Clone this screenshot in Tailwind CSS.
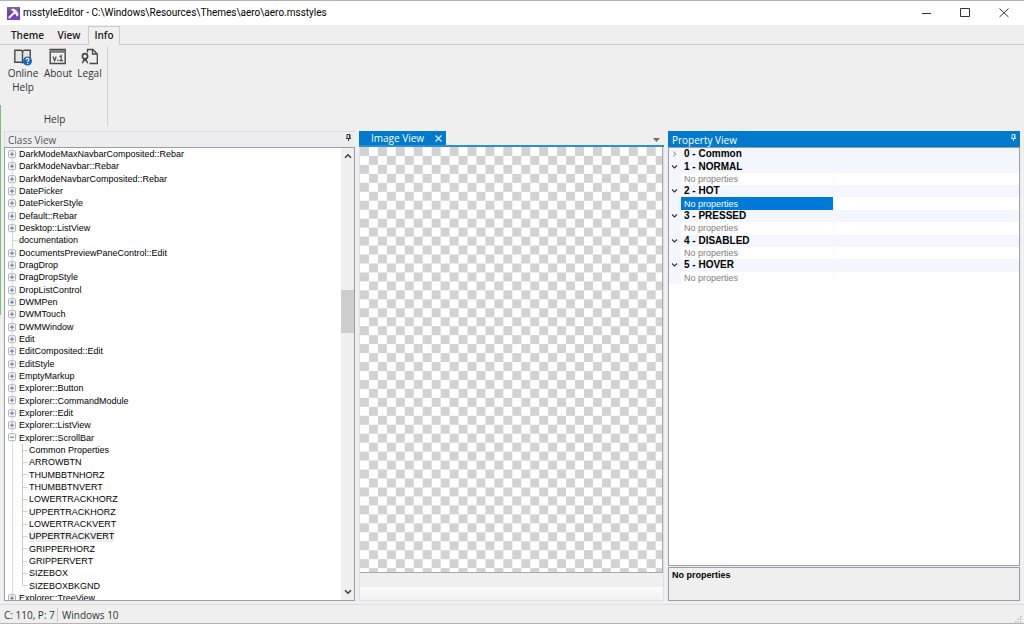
<!DOCTYPE html>
<html lang="en">
<head>
<meta charset="utf-8">
<meta name="viewport" content="width=device-width, initial-scale=1">
<title>msstyleEditor</title>
<script src="https://cdn.jsdelivr.net/npm/@tailwindcss/browser@4"></script>
</head>
<body class="relative flex h-screen flex-col overflow-hidden border-y border-[#b4b4b4] bg-[#efefef] font-['Open_Sans','Noto_Sans',sans-serif] text-[10px] leading-[14px] text-[#333]">
<div class="absolute left-0 top-[104px] h-[210px] w-px bg-[#79c379]"></div>

<header class="flex h-6 shrink-0 items-center bg-white pl-[7px] text-black">
  <svg class="size-[13px]" viewBox="0 0 13 13" aria-hidden="true">
    <defs><linearGradient id="logo" x1="0" y1="0" x2="0" y2="1"><stop offset="0" stop-color="#7a6d96"/><stop offset=".5" stop-color="#6b3fb4"/><stop offset="1" stop-color="#7b44d4"/></linearGradient></defs>
    <rect width="13" height="13" fill="url(#logo)"/>
    <path d="M1.800 11 7.500 5.500" stroke="#fff" stroke-width="2"/>
    <path d="M3.600 2.500 6.500 1.600 9.400 3.200l1 1.700 1.300 1.500-.6 2.500-1.500.5L8.300 7 6.300 4.600z" fill="#f2ecfa"/>
  </svg>
  <h1 class="ml-[3px] whitespace-nowrap font-[Roboto,sans-serif]">msstyleEditor - C:\Windows\Resources\Themes\aero\aero.msstyles</h1>
  <div class="ml-auto flex h-full">
    <button class="grid w-10 place-items-center" aria-label="Minimize"><svg class="size-[10px]" viewBox="0 0 10 10"><path d="M1 5.500h9" stroke="#333"/></svg></button>
    <button class="grid w-[38px] place-items-center" aria-label="Maximize"><svg class="size-[10px]" viewBox="0 0 10 10"><path d="M.500.500h9v8h-9z" fill="none" stroke="#333"/></svg></button>
    <button class="grid w-10 place-items-center" aria-label="Close"><svg class="size-[10px]" viewBox="0 0 10 10"><path d="M.500.500 9.500 9M9.500.500.500 9" stroke="#333"/></svg></button>
  </div>
</header>

<nav class="flex h-5 shrink-0 items-stretch border-b border-[#cacaca] pl-[5px] font-semibold text-[#222]" aria-label="Ribbon tabs">
  <button class="w-[45px]">Theme</button>
  <button class="w-[38px]">View</button>
  <button class="-mb-px mt-px w-8 border border-b-0 border-[#cacaca] bg-[#efefef] pb-[2px]">Info</button>
</nav>

<section class="flex h-[86px] shrink-0 items-start pb-[5px] pl-[5px] pt-px" aria-label="Info">
  <div class="flex h-full flex-col border-r border-[#d2d2d2] pr-[3px]">
    <div class="flex items-start">
      <button class="flex w-9 flex-col items-center pt-[2px]">
        <svg class="size-[18px]" viewBox="0 0 18 18" fill="none" stroke="#484848"><path d="M8.500 3.500v11M.8 2.300H7l1.500 1.200L10 2.300h6.200v11.900H10l-1.500.8L7 14.200H.8z" stroke-width="1.400" fill="#e6e6e6"/><circle cx="13.500" cy="13" r="4.500" fill="#1268c4" stroke="none"/><path d="M12 11.800c0-2 3-1.900 3-.2 0 1.200-1.400 1-1.400 2.200M13.600 14.700v1.200" stroke="#fff" stroke-width="1.200"/></svg>
        <span>Online<br>Help</span>
      </button>
      <button class="flex w-[34px] flex-col items-center pt-[2px]">
        <svg class="size-[18px]" viewBox="0 0 18 18" fill="none" stroke="#484848"><path d="M1.200 1.500h15v14h-15z" stroke-width="1.400"/><path d="M1.200 3.500h15" stroke-width="2.600" stroke="#777"/><path d="m4 8.500 1.600 4.200 1.600-4.200M8.800 11.500v1.600M10.500 8.800l1.700-1.200v5.500M10.400 12.600h3.600" stroke-width="1.200"/></svg>
        <span>About</span>
      </button>
      <button class="flex w-[29px] flex-col items-center pt-[2px]">
        <svg class="size-[18px]" viewBox="0 0 18 18" fill="none" stroke="#484848" stroke-width="1.300"><path d="M6.500 4.500v-3h5.300l4.500 4.500v9.500H8.500M11.500 1.500V6h4.800"/><circle cx="4" cy="8.300" r="2.600" stroke-width="1.700"/><path d="m3.200 10.800-1.900 4.500M4.800 10.800l1.900 4.500M2.500 13.200 4 11.700l1.500 1.500"/></svg>
        <span>Legal</span>
      </button>
    </div>
    <div class="mt-auto text-center">Help</div>
  </div>
</section>

<main class="flex min-h-0 flex-1 gap-1 px-1">
  <section class="flex w-[351px] shrink-0 flex-col" aria-label="Class View">
    <div class="flex h-4 shrink-0 items-center gap-1 border-l border-t border-[#dcdce4] bg-[#ededf1] pl-[3px] pr-[3px] text-[#555]">
      <h2 class="whitespace-nowrap">Class View</h2>
      <div class="h-[4px] flex-1 bg-[radial-gradient(#d2d2d6_40%,transparent_45%)] bg-[size:2px_2px]"></div>
      <button class="mb-1 ml-2" aria-label="Pin Class View"><svg class="h-[8px] w-[7px]" viewBox="0 0 7 8"><path d="M2 .500h3v4H2zM1 4.500h5M3.500 4.500V7" fill="none" stroke="#333"/><path d="M4.500 0v4.500" stroke="#333"/></svg></button>
    </div>
    <div class="flex min-h-0 flex-1 border border-[#9a9ca6] bg-white">
      <div class="min-w-0 flex-1 overflow-hidden">
        <ul id="tree" class="grid h-[456px] auto-rows-fr font-['Liberation_Sans',Arial,sans-serif] text-[9px] leading-[12px] text-black" role="tree"></ul>
      </div>
      <div class="flex w-[13px] shrink-0 flex-col items-center bg-[#efefef]">
        <button class="grid h-4 w-full place-items-center" aria-label="Scroll up"><svg class="h-[6px] w-[8px]" viewBox="0 0 8 6"><path d="M1 4.800 4 1.800l3 3" fill="none" stroke="#444" stroke-width="1.600"/></svg></button>
        <div class="grow-[126]"></div>
        <div class="h-[43px] w-full bg-[#cdcdcd]"></div>
        <div class="grow-[251]"></div>
        <button class="grid h-4 w-full place-items-center" aria-label="Scroll down"><svg class="h-[6px] w-[8px]" viewBox="0 0 8 6"><path d="m1 1.200 3 3 3-3" fill="none" stroke="#444" stroke-width="1.600"/></svg></button>
      </div>
    </div>
  </section>

  <section class="flex min-w-0 flex-1 flex-col" aria-label="Image View">
    <div class="flex h-4 shrink-0 items-stretch border-b-2 border-[#2a8fd6]">
      <div class="flex w-[87px] items-center justify-between bg-[#007acc] pl-3 pr-1 text-white">
        <h2 class="whitespace-nowrap">Image View</h2>
        <button aria-label="Close Image View"><svg class="size-[7px]" viewBox="0 0 7 7"><path d="m.500.500 6 6M6.500.500l-6 6" stroke="#d5eaf8" stroke-width="1.300"/></svg></button>
      </div>
      <button class="ml-auto mr-1 mt-1" aria-label="Window list"><svg class="h-[4px] w-[7px]" viewBox="0 0 7 4"><path d="M0 0h7L3.500 4z" fill="#717171"/></svg></button>
    </div>
    <div class="flex min-h-0 flex-1 flex-col border border-t-0 border-[#dfdfe8]">
      <svg class="min-h-0 w-full flex-1 border-b border-r border-[#a8a8a8] bg-white" role="img" aria-label="Transparent image">
        <defs><pattern id="checks" width="17.920" height="17.920" patternUnits="userSpaceOnUse"><path d="M0 0h8.960v8.960H0zM8.960 8.960h8.960v8.960H8.960z" fill="#d2d2d2"/></pattern></defs>
        <rect width="100%" height="100%" fill="url(#checks)"/>
      </svg>
      <div class="h-[14px] shrink-0"></div>
      <div class="h-[13px] shrink-0 bg-linear-to-b from-[#fcfcfc] to-[#f1f1f1]"></div>
    </div>
  </section>

  <section class="flex w-[352px] shrink-0 flex-col" aria-label="Property View">
    <div class="flex h-4 shrink-0 items-center gap-1 bg-[#007acc] pl-1 pr-[3px] pt-px text-white">
      <h2 class="whitespace-nowrap">Property View</h2>
      <div class="h-[4px] flex-1 bg-[radial-gradient(#2b92d8_40%,transparent_45%)] bg-[size:2px_2px]"></div>
      <button class="mb-1 ml-2" aria-label="Pin Property View"><svg class="h-[8px] w-[7px]" viewBox="0 0 7 8"><path d="M2 .500h3v4H2zM1 4.500h5M3.500 4.500V7M4.500 0v4.500" fill="none" stroke="#cfe6f6"/></svg></button>
    </div>
    <div class="flex-1 border border-[#9a9ca6] bg-white">
      <div id="props" class="grid h-[136px] auto-rows-fr font-['Liberation_Sans',Arial,sans-serif] text-[10px] leading-[12px]"></div>
    </div>
    <div class="mt-px h-[34px] shrink-0 border border-[#9a9ca6] pl-[3px] pt-px font-['Liberation_Sans',Arial,sans-serif] text-[9px] font-bold leading-[12px] text-black">No properties</div>
  </section>
</main>

<footer class="mt-[3px] flex h-[19px] shrink-0 items-center border-t border-[#dedede] pl-[4px] pt-px">
  <span class="w-[54px] whitespace-nowrap border-r border-[#c8c8c8]">C: 110, P: 7</span>
  <span class="ml-1">Windows 10</span>
  <svg class="ml-auto mr-[2px] size-[7px] self-end" viewBox="0 0 7 7" aria-hidden="true"><path d="M5 0h1.500v1.500H5zM2.500 2.500H4V4H2.500zM5 2.500h1.500V4H5zM0 5h1.500v1.500H0zM2.500 5H4v1.500H2.500zM5 5h1.500v1.500H5z" fill="#bdbdbd"/></svg>
</footer>

<script>
const before = ['DarkModeMaxNavbarComposited::Rebar','DarkModeNavbar::Rebar','DarkModeNavbarComposited::Rebar','DatePicker','DatePickerStyle','Default::Rebar','Desktop::ListView','documentation','DocumentsPreviewPaneControl::Edit','DragDrop','DragDropStyle','DropListControl','DWMPen','DWMTouch','DWMWindow','Edit','EditComposited::Edit','EditStyle','EmptyMarkup','Explorer::Button','Explorer::CommandModule','Explorer::Edit','Explorer::ListView','Explorer::ScrollBar'];
const parts = ['Common Properties','ARROWBTN','THUMBBTNHORZ','THUMBBTNVERT','LOWERTRACKHORZ','UPPERTRACKHORZ','LOWERTRACKVERT','UPPERTRACKVERT','GRIPPERHORZ','GRIPPERVERT','SIZEBOX','SIZEBOXBKGND'];
const box = open => `<svg class="h-full w-[14px] shrink-0" viewBox="0 0 14 12" aria-hidden="true"><path d="M7.500-1v14" stroke="#dcdcdc"/><rect x="3.500" y="2.500" width="7" height="7" rx="1" fill="#f4f4f4" stroke="#b4b4b4"/><path d="M5 6h4${open ? '' : 'M7 4v4'}" stroke="#5670b8"/></svg>`;
const leaf = '<svg class="h-full w-[14px] shrink-0" viewBox="0 0 14 12" aria-hidden="true"><path d="M7.500-1v14M7.500 6.500h5" stroke="#d0d0d0" fill="none"/></svg>';
const child = last => `<svg class="h-full w-[24px] shrink-0" viewBox="0 0 24 12" aria-hidden="true"><path d="M7.500-1v14" stroke="#dcdcdc"/><path d="M17.500-1V${last ? '6.500' : '13'}M17.500 6.500h5" stroke="#cacaca" fill="none"/></svg>`;
const row = (icon, name, selected) => `<li class="flex min-h-0 items-center whitespace-nowrap" role="treeitem">${icon}<span class="${selected ? 'bg-[#efefef]' : ''}">${name}</span></li>`;
document.getElementById('tree').innerHTML =
  before.map(n => row(n === 'documentation' ? leaf : box(n === 'Explorer::ScrollBar'), n)).join('') +
  parts.map((n, i) => row(child(i === parts.length - 1), n, n === 'UPPERTRACKVERT')).join('') +
  row(box(false), 'Explorer::TreeView');

const group = (name, open) => `<div class="flex min-h-0 items-center bg-[#f3f6fc] font-bold text-black"><svg class="mr-[6px] ml-[2px] h-[8px] w-[7px]" viewBox="0 0 7 8" aria-hidden="true"><path d="${open ? 'M1 2.500 3.500 5 6 2.500' : 'M2.500 1.500 4.500 4 2.500 6.500'}" fill="none" stroke="${open ? '#333' : '#999'}" stroke-width="1.100"/></svg>${name}</div>`;
const none = selected => `<div class="flex min-h-0 items-stretch bg-[#f3f6fc] pl-3 text-[9px]"><div class="flex w-[153px] items-center border-r border-[#f3f6fc] pl-[3px] ${selected ? 'bg-[#0078d7] text-white' : 'bg-white text-[#7d7d7d]'}">No properties</div><div class="flex-1 bg-white"></div></div>`;
document.getElementById('props').innerHTML = group('0 - Common', false) +
  ['1 - NORMAL','2 - HOT','3 - PRESSED','4 - DISABLED','5 - HOVER'].map(n => group(n, true) + none(n === '2 - HOT')).join('');
</script>
</body>
</html>
